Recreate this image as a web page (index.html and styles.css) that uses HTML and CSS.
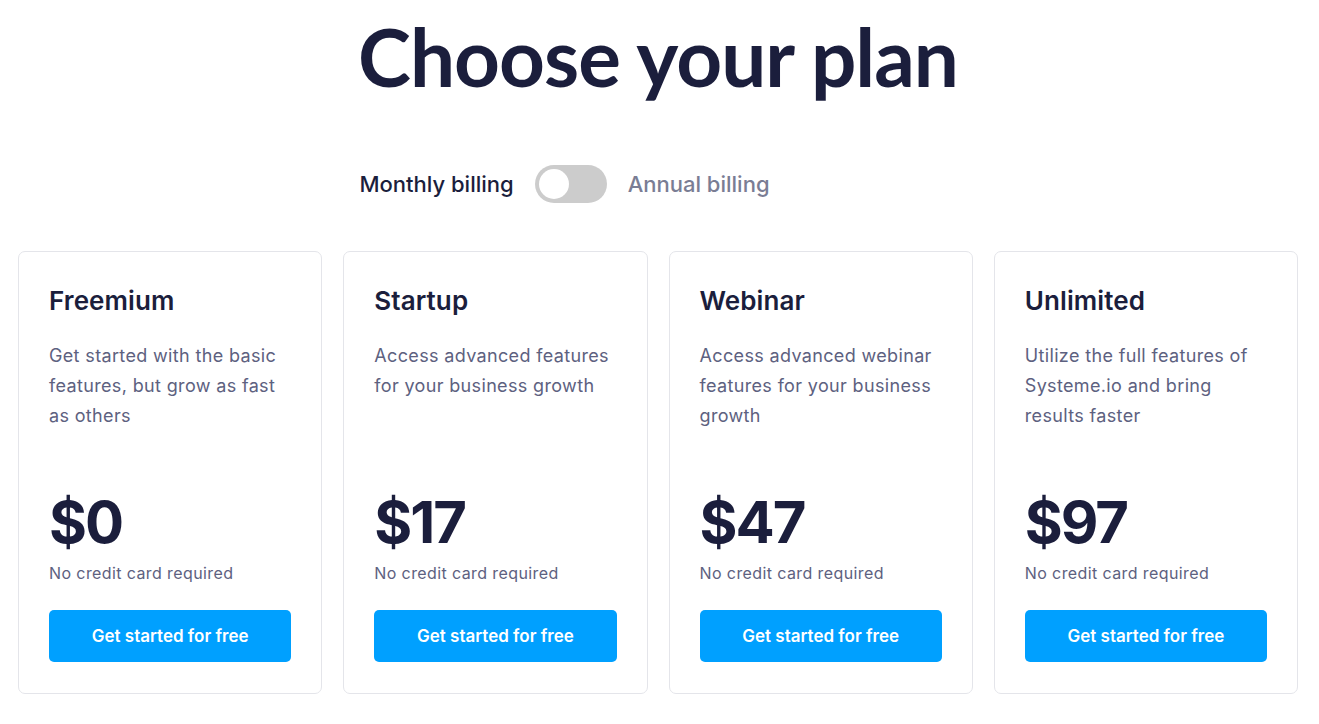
FILE: index.html
```html
<!DOCTYPE html>
<html lang="en">
<head>
<meta charset="utf-8">
<title>Choose your plan</title>
<link rel="stylesheet" href="styles.css">
</head>
<body>
<main class="page">
  <h1 class="heading">Choose your plan</h1>
  <div class="billing">
    <span class="billing-label active">Monthly billing</span>
    <span class="switch"><span class="knob"></span></span>
    <span class="billing-label">Annual billing</span>
  </div>
  <section class="plans">
    <article class="plan">
      <h2 class="plan-name">Freemium</h2>
      <p class="plan-desc">Get started with the basic features, but grow as fast as others</p>
      <div class="price">$0</div>
      <p class="note">No credit card required</p>
      <a class="cta" href="#">Get started for free</a>
    </article>
    <article class="plan">
      <h2 class="plan-name">Startup</h2>
      <p class="plan-desc">Access advanced features for your business growth</p>
      <div class="price">$17</div>
      <p class="note">No credit card required</p>
      <a class="cta" href="#">Get started for free</a>
    </article>
    <article class="plan">
      <h2 class="plan-name">Webinar</h2>
      <p class="plan-desc">Access advanced webinar features for your business growth</p>
      <div class="price">$47</div>
      <p class="note">No credit card required</p>
      <a class="cta" href="#">Get started for free</a>
    </article>
    <article class="plan">
      <h2 class="plan-name">Unlimited</h2>
      <p class="plan-desc">Utilize the full features of Systeme.io and bring results faster</p>
      <div class="price">$97</div>
      <p class="note">No credit card required</p>
      <a class="cta" href="#">Get started for free</a>
    </article>
  </section>
</main>
</body>
</html>
```

FILE: styles.css
```css
* { box-sizing: border-box; }
html, body { margin: 0; padding: 0; background: #fff; }
body {
  font-family: Inter, Lato, "Noto Sans", "Liberation Sans", sans-serif;
  color: #1b1e3c;
}
.page { padding: 0 21px 0 18px; }
.heading {
  margin: 0;
  padding-top: 12px;
  text-align: center;
  font-family: Lato, "Noto Sans", sans-serif;
  font-size: 80px;
  line-height: 88px;
  font-weight: 700;
  letter-spacing: -1px;
  color: #1b1e3c;
}
.billing {
  display: flex;
  align-items: center;
  justify-content: center;
  gap: 21px;
  margin-top: 65px;
  padding-right: 187px;
  height: 38px;
}
.billing-label {
  font-size: 22px;
  font-weight: 500;
  color: #7a7d94;
}
.billing-label.active { color: #1b1e3c; }
.switch {
  display: flex;
  align-items: center;
  width: 72px;
  height: 38px;
  border-radius: 19px;
  background: #cccccc;
  padding: 4px;
}
.knob {
  width: 30px;
  height: 30px;
  border-radius: 50%;
  background: #fff;
}
.plans {
  display: grid;
  grid-template-columns: repeat(4, 1fr);
  gap: 21px;
  margin-top: 48px;
}
.plan {
  display: flex;
  flex-direction: column;
  border: 1px solid #e4e5ea;
  border-radius: 7px;
  padding: 32px 30px 31px;
}
.plan-name {
  margin: 0;
  font-size: 26px;
  line-height: 34px;
  font-weight: 600;
  letter-spacing: 0.1px;
  color: #1b1e3c;
}
.plan-desc {
  margin: 23px 0 0;
  min-height: 90px;
  font-size: 18px;
  line-height: 30px;
  letter-spacing: 0.35px;
  color: #5d6180;
}
.price {
  margin-top: 59px;
  font-size: 58px;
  line-height: 64px;
  font-weight: 700;
  color: #1b1e3c;
  letter-spacing: -2px;
}
.note {
  margin: 7px 0 0;
  font-size: 16px;
  line-height: 24px;
  letter-spacing: 0.4px;
  color: #5d6180;
}
.cta {
  display: flex;
  align-items: center;
  justify-content: center;
  margin-top: 25px;
  height: 52px;
  border-radius: 5px;
  background: #00a0ff;
  color: #fff;
  text-decoration: none;
  font-size: 17px;
  font-weight: 600;
}
```
